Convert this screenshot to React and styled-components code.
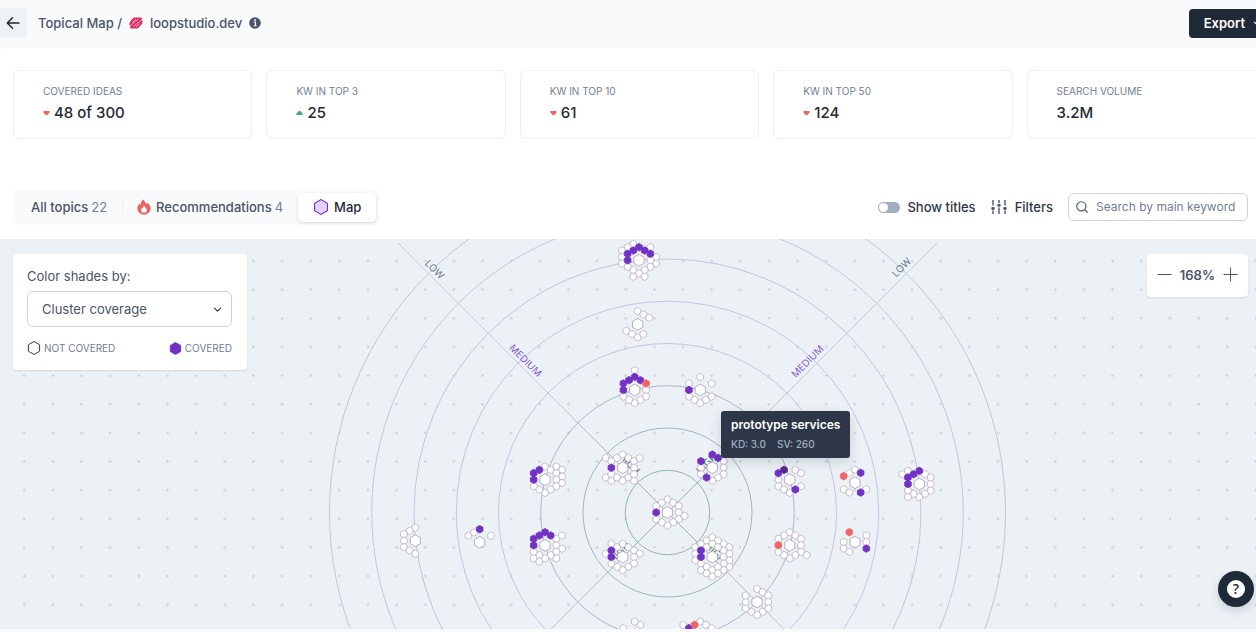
import { useState } from "react";
import styled, { createGlobalStyle } from "styled-components";

const GlobalStyle = createGlobalStyle`
  * {
    box-sizing: border-box;
  }
  body {
    margin: 0;
    background: #f8fafc;
    color: #4a5568;
    font-family: Inter, "Liberation Sans", sans-serif;
    font-size: 14px;
    line-height: 20px;
    overflow-x: hidden;
  }
  h1, p, dl, dt, dd {
    margin: 0;
  }
  button, input, select {
    font: inherit;
    color: inherit;
  }
  button {
    border: none;
    padding: 0;
    background: none;
    cursor: pointer;
  }
`;

const Page = styled.div`
  display: flex;
  flex-direction: column;
  min-height: 100vh;
  overflow: hidden;
`;

const Header = styled.header`
  display: flex;
  align-items: center;
  height: 48px;
  padding-bottom: 2px;
  background: #f8fafc;
`;

const BackButton = styled.button`
  display: flex;
  align-items: center;
  justify-content: flex-end;
  width: 27px;
  height: 30px;
  padding-right: 7px;
  background: #edf2f7;
  border-radius: 0 4px 4px 0;
`;

const Title = styled.h1`
  flex: 1;
  display: flex;
  align-items: center;
  gap: 7px;
  margin-left: 11px;
  font-size: 13px;
  font-weight: 500;
`;

const ExportButton = styled.button`
  display: flex;
  align-items: center;
  gap: 8px;
  height: 29px;
  padding: 0 16px 0 15px;
  margin-right: -22px;
  border-radius: 4px;
  background: #1f2937;
  color: #fff;
  font-size: 13px;
  font-weight: 600;
`;

const Content = styled.div`
  padding: 22px 8px 14px 13px;
  border-radius: 6px 0 0 0;
  background: #fff;
`;

const Stats = styled.dl`
  display: grid;
  grid-template-columns: repeat(5, 1fr);
  gap: 14px;
  margin-right: -18px;
`;

const StatCard = styled.div`
  height: 69px;
  padding: 10px 29px;
  border: 1px solid #edeff2;
  border-radius: 6px;
`;

const StatLabel = styled.dt`
  font-size: 10px;
  color: #718096;
`;

const StatValue = styled.dd`
  display: flex;
  align-items: center;
  gap: 4px;
  height: 24px;
  font-size: 15px;
  font-weight: 500;
  color: #1f2937;
`;

const Toolbar = styled.div`
  display: flex;
  align-items: center;
  justify-content: space-between;
  margin-top: 50px;
`;

const Tabs = styled.nav`
  display: flex;
  align-items: center;
  height: 36px;
  padding: 0 3px;
  border-radius: 6px;
  background: #f8fafc;
`;

const Tab = styled.button`
  display: flex;
  align-items: center;
  gap: 5px;
  height: 29px;
  padding: 0 15px 1px;
  border-radius: 5px;
  font-size: 13px;
  font-weight: 500;
  color: ${({ $active }) => ($active ? "#1f2937" : "#4a5568")};
  background: ${({ $active }) => ($active ? "#fff" : "transparent")};
  box-shadow: ${({ $active }) => ($active ? "0 1px 3px rgba(31, 41, 55, 0.16)" : "none")};
`;

const Count = styled.span`
  margin-left: -2px;
  font-weight: 400;
  color: #718096;
`;

const Divider = styled.span`
  width: 1px;
  height: 14px;
  margin-right: -1px;
  background: #edf2f7;
`;

const Tools = styled.div`
  display: flex;
  align-items: center;
  gap: 15px;
  font-size: 13px;
  color: #2d3748;
`;

const ToggleLabel = styled.label`
  display: flex;
  align-items: center;
  gap: 7px;
  font-weight: 500;
`;

const Toggle = styled.input`
  appearance: none;
  display: flex;
  align-items: center;
  width: 22px;
  height: 11px;
  margin: 0;
  padding: 1px;
  border-radius: 6px;
  background: #a0aec0;
  &::before {
    content: "";
    width: 9px;
    height: 9px;
    border-radius: 50%;
    background: #fff;
  }
  &:checked {
    justify-content: flex-end;
    background: #6b33c8;
  }
`;

const FilterButton = styled.button`
  display: flex;
  align-items: center;
  gap: 8px;
  font-weight: 500;
`;

const SearchBox = styled.label`
  display: flex;
  align-items: center;
  gap: 8px;
  width: 180px;
  height: 28px;
  padding: 0 7px;
  border: 1px solid #cbd5e0;
  border-radius: 6px;
`;

const SearchInput = styled.input`
  flex: 1;
  min-width: 0;
  padding: 0;
  border: none;
  outline: none;
  background: none;
  font-size: 12px;
  &::placeholder {
    color: #718096;
    opacity: 1;
  }
`;

const MapArea = styled.main`
  flex: 1;
  position: relative;
  min-height: 390px;
  margin-bottom: 3px;
  background: #ecf1f6;
  overflow: hidden;
`;

const Canvas = styled.svg`
  display: block;
  width: 100%;
  height: 390px;
`;

const Panel = styled.section`
  position: absolute;
  top: 15px;
  border-radius: 4px;
  background: #fff;
  box-shadow: 0 1px 2px rgba(31, 41, 55, 0.12);
`;

const ShadePanel = styled(Panel)`
  left: 13px;
  width: 234px;
  padding: 12px 15px 12px 14px;
`;

const ShadeLabel = styled.label`
  display: block;
  margin-bottom: 5px;
  font-size: 13px;
`;

const SelectWrap = styled.div`
  display: grid;
  align-items: center;
  > * {
    grid-area: 1 / 1;
  }
  > svg {
    justify-self: end;
    margin-right: 10px;
    pointer-events: none;
  }
`;

const Select = styled.select`
  appearance: none;
  width: 100%;
  height: 36px;
  padding: 0 14px;
  border: 1px solid #cbd5e0;
  border-radius: 6px;
  background: #fff;
  font-size: 13px;
`;

const Legend = styled.div`
  display: flex;
  justify-content: space-between;
  margin-top: 11px;
  font-size: 10px;
  color: #718096;
`;

const LegendItem = styled.span`
  display: flex;
  align-items: center;
  gap: 3px;
`;

const ZoomPanel = styled(Panel)`
  right: 8px;
  display: flex;
  align-items: center;
  gap: 8px;
  height: 43px;
  padding: 0 10px 2px;
  font-size: 13px;
  font-weight: 600;
`;

const ZoomButton = styled.button`
  display: flex;
`;

const Tooltip = styled.div`
  position: absolute;
  top: 172px;
  left: calc(50% + 93px);
  height: 47px;
  padding: 4px 10px;
  border-radius: 3px;
  background: #2d3748;
  box-shadow: 0 4px 12px rgba(31, 41, 55, 0.16);
  color: #fff;
  font-size: 12px;
  font-weight: 600;
`;

const TooltipMeta = styled.p`
  display: flex;
  gap: 11px;
  font-size: 10px;
  line-height: 18px;
  font-weight: 500;
  color: #a0aec0;
`;

const HelpButton = styled.button`
  position: absolute;
  right: 2px;
  bottom: 22px;
  display: flex;
  align-items: center;
  justify-content: center;
  width: 36px;
  height: 36px;
  border-radius: 50%;
  background: #1f2937;
  box-shadow: 0 4px 10px rgba(31, 41, 55, 0.16);
`;

const HelpMark = styled.span`
  width: 18px;
  height: 18px;
  border-radius: 50%;
  background: #fff;
  color: #1f2937;
  font-family: "Open Sans", sans-serif;
  font-size: 14px;
  font-weight: 600;
  line-height: 18px;
`;

const stats = [
  { label: "COVERED IDEAS", value: "48 of 300", trend: "down" },
  { label: "KW IN TOP 3", value: "25", trend: "up" },
  { label: "KW IN TOP 10", value: "61", trend: "down" },
  { label: "KW IN TOP 50", value: "124", trend: "down" },
  { label: "SEARCH VOLUME", value: "3.2M" },
];

const PURPLE = "#7132c4";
const CENTER = { x: 667.5, y: 273.5 };
const RING_STEP = 42.25;
const COL = 5.67;
const ROW = 3.27;

const rings = [
  "#8fb5ae",
  "#a5b4bb",
  "#b0b5d0",
  "#c6c3e6",
  "#c6c3e6",
  "#c1c4df",
  "#c1c8d8",
  "#c1c8d4",
];

// Cells are "column,row" steps from the middle of a cluster.
const clusters = [
  { x: 639, y: 21.3, open: "-1,-5 -3,-3 -2,-4 -3,-1 -3,1 2,-4 3,-1 3,1 2,0 2,2 1,3 -1,3 0,4 -1,5 1,5 -2,2", covered: "-2,0 -2,-2 -1,-3 0,-4 1,-3 2,-2" },
  { x: 637.7, y: 85.3, open: "0,-4 1,-3 2,-2 -2,2 -1,3 0,4 1,3" },
  { x: 634.7, y: 151, open: "0,-6 2,0 2,2 1,3 0,4 -1,3 -2,2", covered: "-2,0 -2,-2 -1,-3 0,-4 1,-3", hot: "2,-2" },
  { x: 700.3, y: 151, open: "0,-4 2,-2 -2,-2 -2,2 -1,3 0,4 1,3 2,2", covered: "-2,0" },
  { x: 622.7, y: 228.7, open: "-3,-3 -2,-2 -1,-3 0,-4 1,-3 2,-2 3,-3 2,0 -3,3 -2,4 -2,2 -1,3 0,4 1,3 2,2 2,4", covered: "-2,0" },
  { x: 712.3, y: 228.7, open: "-2,0 -2,2 2,-2 2,0 2,2 1,3 0,4", covered: "-2,-2 0,-4 1,-3 -1,3" },
  { x: 667.5, y: 273.5, open: "0,-4 -1,-3 -2,-2 1,-3 2,-2 2,0 3,1 2,2 1,3 0,4 -1,3 -2,2", covered: "-2,0" },
  { x: 622.7, y: 318, open: "-2,-4 -1,-3 0,-4 1,-3 2,-2 3,-1 2,0 2,2 1,3 0,4 -1,3 -2,2 -3,-1", covered: "-2,-2 -2,0" },
  { x: 712.3, y: 318, open: "-3,-3 -3,-1 -3,1 -2,-4 -1,-5 0,-6 1,-5 2,-4 3,-3 3,-1 3,1 3,3 2,-2 2,0 2,2 2,4 -1,-3 0,-4 1,-3 -2,2 -2,4 -1,3 0,4 1,3 -1,5 1,5 0,6", covered: "-2,-2 -2,0" },
  { x: 634.7, y: 395.7, open: "0,-4 1,-3 -2,-2" },
  { x: 700.3, y: 395.7, open: "-3,-3 0,-4 1,-3 2,-2", covered: "-2,-2", hot: "-1,-3" },
  { x: 789.7, y: 240.7, open: "1,-3 2,-2 -2,0 -2,2 -1,3 0,4 2,2", covered: "-2,-2 1,3", active: "-1,-3" },
  { x: 855, y: 243.7, open: "-1,-3 0,-4 -2,2 -1,3 2,2", covered: "1,-3 1,3", hot: "-2,-2" },
  { x: 919.3, y: 245, open: "-3,-3 -2,-4 1,-3 2,-2 2,0 2,2 1,3 0,4 -1,3 -2,2 -2,4", covered: "0,-4 -1,-3 -2,-2 -2,0" },
  { x: 789.7, y: 306.3, open: "0,-4 -1,-3 -2,-2 1,-3 2,-2 2,0 2,2 3,3 1,3 0,4 -1,3 -2,2", hot: "-2,0" },
  { x: 855, y: 303, open: "2,-2 2,0 -2,0 -2,2 -1,3", covered: "2,2", hot: "-1,-3" },
  { x: 757, y: 363, open: "0,-4 1,-3 2,-2 2,0 2,2 1,3 0,4 -1,3 -2,2 -2,0 -2,-2" },
  { x: 545, y: 240.7, open: "0,-4 1,-3 2,-4 3,-3 3,-1 3,1 2,-2 2,0 2,2 1,3 0,4 -1,3 -2,2", covered: "-1,-3 -2,-2 -2,0" },
  { x: 545, y: 306.3, open: "2,-2 3,-3 2,0 3,1 2,2 2,4 1,3 0,4 -1,3 -2,2 -2,4 -1,5", covered: "0,-4 -1,-3 -2,-2 -2,0 1,-3" },
  { x: 479.7, y: 303.3, open: "-1,-3 -2,-2 2,-2", covered: "0,-4" },
  { x: 415.3, y: 301.7, open: "0,-4 -1,-3 -2,-2 -2,0 -2,2 -1,3 0,4" },
];

const cellFill = {
  open: "#fff",
  covered: PURPLE,
  hot: "#f0636a",
  active: "#55298f",
};

const hexPoints = (x, y, r) =>
  [0, 1, 2, 3, 4, 5]
    .map((i) => {
      const a = (Math.PI / 3) * i + Math.PI / 6;
      return `${(x + r * Math.cos(a)).toFixed(2)},${(y + r * Math.sin(a)).toFixed(2)}`;
    })
    .join(" ");

const Hexagon = ({ size, fill, stroke }) => (
  <svg width={size} height={size} viewBox="0 0 16 16" aria-hidden="true">
    <polygon points={hexPoints(8, 8, 7.4)} fill={fill} stroke={stroke} strokeWidth="1.1" />
  </svg>
);

const Cluster = ({ cluster }) => (
  <g>
    {["open", "covered", "hot", "active"].map((kind) =>
      (cluster[kind] ? cluster[kind].split(" ") : []).map((cell) => {
        const [c, r] = cell.split(",").map(Number);
        return (
          <polygon
            key={kind + cell}
            points={hexPoints(cluster.x + c * COL, cluster.y + r * ROW, 3.8)}
            fill={cellFill[kind]}
            stroke={kind === "open" ? "#b9aec4" : cellFill[kind]}
            strokeWidth="0.8"
          />
        );
      })
    )}
    <polygon
      points={hexPoints(cluster.x, cluster.y, 5.9)}
      fill="#fff"
      stroke="#a49cb0"
      strokeWidth="0.8"
    />
  </g>
);

const MapLabel = ({ x, y, angle, color, children }) => (
  <text
    transform={`translate(${x} ${y}) rotate(${angle})`}
    textAnchor="middle"
    dominantBaseline="central"
    fontFamily="'Open Sans', sans-serif"
    fontSize="10"
    fill={color}
  >
    {children}
  </text>
);

const TopicMap = () => (
  <Canvas viewBox="0 0 1256 390" preserveAspectRatio="xMidYMin slice" role="img" aria-label="Topic map">
    <defs>
      <pattern id="dots" x="10" y="7.7" width="28.64" height="28.64" patternUnits="userSpaceOnUse">
        <circle cx="14.3" cy="14.3" r="1.3" fill="#cbd1d9" />
      </pattern>
      <radialGradient id="axis" gradientUnits="userSpaceOnUse" cx={CENTER.x} cy={CENTER.y} r="380">
        <stop offset="0" stopColor="#8fb5ae" />
        <stop offset="0.14" stopColor="#8fb5ae" />
        <stop offset="0.25" stopColor="#b3bfc8" />
        <stop offset="0.5" stopColor="#c6c3e6" />
        <stop offset="0.75" stopColor="#c6c8e0" />
        <stop offset="1" stopColor="#c6cdd6" />
      </radialGradient>
    </defs>
    <rect width="1256" height="390" fill="url(#dots)" />
    {rings.map((color, i) => (
      <circle key={i} cx={CENTER.x} cy={CENTER.y} r={RING_STEP * (i + 1)} fill="none" stroke={color} />
    ))}
    <path
      d="M398 4L784 390M937 4L551 390"
      stroke="url(#axis)"
      strokeWidth="1"
      fill="none"
    />
    <MapLabel x={630} y={224} angle={45} color="#33665f">HIGH</MapLabel>
    <MapLabel x={706} y={224} angle={-45} color="#33665f">HIGH</MapLabel>
    <MapLabel x={619} y={313} angle={-45} color="#33665f">HIGH</MapLabel>
    <MapLabel x={716} y={313} angle={45} color="#33665f">HIGH</MapLabel>
    {clusters.map((cluster) => (
      <Cluster key={`${cluster.x}-${cluster.y}`} cluster={cluster} />
    ))}
    <MapLabel x={435} y={30} angle={45} color="#64748b">LOW</MapLabel>
    <MapLabel x={901} y={28} angle={-45} color="#64748b">LOW</MapLabel>
    <MapLabel x={526} y={121} angle={45} color="#7c4fd0">MEDIUM</MapLabel>
    <MapLabel x={807} y={122} angle={-45} color="#7c4fd0">MEDIUM</MapLabel>
  </Canvas>
);

const Trend = ({ up }) => (
  <svg width="7" height="6" viewBox="0 0 7 6" role="img" aria-label={up ? "up" : "down"}>
    {up ? (
      <path d="M0.3 4.4Q0 3.4 1 2.8L2.8 1.1Q3.5 0.5 4.2 1.1L6 2.8Q7 3.4 6.7 4.4Q6.5 5 5.8 5H1.2Q0.5 5 0.3 4.4Z" fill="#48a877" />
    ) : (
      <path d="M0.3 1.6Q0 2.6 1 3.2L2.8 4.9Q3.5 5.5 4.2 4.9L6 3.2Q7 2.6 6.7 1.6Q6.5 1 5.8 1H1.2Q0.5 1 0.3 1.6Z" fill="#ee6262" />
    )}
  </svg>
);

const Chevron = ({ color }) => (
  <svg width="9" height="9" viewBox="0 0 10 10" fill="none" aria-hidden="true">
    <path d="M1.5 3.5L5 6.8L8.5 3.5" stroke={color} strokeWidth="1.3" strokeLinecap="round" strokeLinejoin="round" />
  </svg>
);

const App = () => {
  const [showTitles, setShowTitles] = useState(false);
  const [zoom, setZoom] = useState(168);

  return (
    <Page>
      <GlobalStyle />
      <Header>
        <BackButton aria-label="Back">
          <svg width="14" height="14" viewBox="0 0 14 14" fill="none" stroke="#1f2937" strokeWidth="1.5" strokeLinecap="round" strokeLinejoin="round">
            <path d="M13 7H1.5M6.5 1.8L1.3 7L6.5 12.2" />
          </svg>
        </BackButton>
        <Title>
          <span>Topical Map /</span>
          <svg width="14" height="12" viewBox="0 0 14 12" aria-hidden="true">
            <path d="M5 0.5H12Q13 0.5 12.8 1.6L12.5 3L13.8 4.4L12.6 7.4L9.6 10.6Q9 11.5 8 11.5H2.2Q1 11.5 1.2 10.4L1.5 8.8L0.2 7.6L1.3 4.4L4 1.2Z" fill="#e5275f" />
            <path d="M1.6 8.6L9.4 2.2M4.4 9.6L12.4 3.2M3.4 5.2L7 2.2M7.4 9.6L10.8 6.6" stroke="#f8fafc" strokeWidth="0.7" />
          </svg>
          <span>loopstudio.dev</span>
          <svg width="12" height="12" viewBox="0 0 12 12" role="img" aria-label="Info">
            <circle cx="6" cy="6" r="5.8" fill="#4a5568" />
            <path d="M4.7 5H6.4V8.6M4.6 8.8H7.6" stroke="#fff" strokeWidth="1.1" fill="none" />
            <circle cx="6" cy="3" r="0.9" fill="#fff" />
          </svg>
        </Title>
        <ExportButton>
          Export
          <Chevron color="#fff" />
        </ExportButton>
      </Header>

      <Content>
        <Stats>
          {stats.map(({ label, value, trend }) => (
            <StatCard key={label}>
              <StatLabel>{label}</StatLabel>
              <StatValue>
                {trend && <Trend up={trend === "up"} />}
                {value}
              </StatValue>
            </StatCard>
          ))}
        </Stats>

        <Toolbar>
          <Tabs>
            <Tab>
              All topics <Count>22</Count>
            </Tab>
            <Divider />
            <Tab>
              <svg width="14" height="16" viewBox="0 0 14 16" aria-hidden="true">
                <path d="M6.6 0.4C7.2 2.6 9 3.4 9.7 5.2C10.2 4.8 10.5 4.3 10.6 3.7C12.4 5.3 13.6 7.3 13.6 9.4A6.6 6.3 0 0 1 0.4 9.4C0.4 7.2 1.4 5.8 2.4 4.6C2.7 5.4 3 5.8 3.6 6.1C3.4 3.8 4.4 1.6 6.6 0.4Z" fill="#ee6262" />
                <path d="M7 6.6C7.4 8.2 9.8 8.8 9.8 11A2.8 2.7 0 0 1 4.2 11C4.2 9.8 4.7 9 5.3 8.4C5.5 9 5.8 9.2 6.2 9.3C6 8.3 6.3 7.3 7 6.6Z" fill="#fff" />
              </svg>
              Recommendations <Count>4</Count>
            </Tab>
            <Tab $active>
              <Hexagon size={16} fill="#e4d4fa" stroke={PURPLE} />
              Map
            </Tab>
          </Tabs>
          <Tools>
            <ToggleLabel>
              <Toggle type="checkbox" checked={showTitles} onChange={() => setShowTitles(!showTitles)} />
              Show titles
            </ToggleLabel>
            <FilterButton>
              <svg width="16" height="16" viewBox="0 0 16 16" fill="none" stroke="#4a5568" strokeWidth="1.4" aria-hidden="true">
                <path d="M2 1V6.5M2 11.5V15M8 1V4M8 8.5V15M14 1V6.5M14 11.5V15" />
                <path d="M1.6 9.5H2.4M7.6 6.3H8.4M13.6 9.5H14.4" strokeWidth="2.8" strokeLinecap="round" />
              </svg>
              Filters
            </FilterButton>
            <SearchBox>
              <svg width="12" height="12" viewBox="0 0 13 13" fill="none" stroke="#4a5568" strokeWidth="1.3" strokeLinecap="round" aria-hidden="true">
                <circle cx="5.8" cy="5.8" r="5" />
                <path d="M9.4 9.4L12.2 12.2" />
              </svg>
              <SearchInput type="text" placeholder="Search by main keyword" aria-label="Search by main keyword" />
            </SearchBox>
          </Tools>
        </Toolbar>
      </Content>

      <MapArea>
        <TopicMap />
        <ShadePanel>
          <ShadeLabel htmlFor="shade">Color shades by:</ShadeLabel>
          <SelectWrap>
            <Select id="shade">
              <option>Cluster coverage</option>
            </Select>
            <Chevron color="#2d3748" />
          </SelectWrap>
          <Legend>
            <LegendItem>
              <Hexagon size={14} fill="#fff" stroke="#3c2a4d" />
              NOT COVERED
            </LegendItem>
            <LegendItem>
              <Hexagon size={13} fill={PURPLE} stroke={PURPLE} />
              COVERED
            </LegendItem>
          </Legend>
        </ShadePanel>
        <ZoomPanel>
          <ZoomButton aria-label="Zoom out" onClick={() => setZoom(zoom - 10)}>
            <svg width="15" height="15" viewBox="0 0 15 15" stroke="#4a5568">
              <path d="M0.5 7.5H14.5" />
            </svg>
          </ZoomButton>
          {zoom}%
          <ZoomButton aria-label="Zoom in" onClick={() => setZoom(zoom + 10)}>
            <svg width="15" height="15" viewBox="0 0 15 15" stroke="#4a5568">
              <path d="M0.5 7.5H14.5M7.5 0.5V14.5" />
            </svg>
          </ZoomButton>
        </ZoomPanel>
        <Tooltip role="tooltip">
          <p>prototype services</p>
          <TooltipMeta>
            <span>KD: 3.0</span>
            <span>SV: 260</span>
          </TooltipMeta>
        </Tooltip>
        <HelpButton aria-label="Help">
          <HelpMark>?</HelpMark>
        </HelpButton>
      </MapArea>
    </Page>
  );
};

export default App;
